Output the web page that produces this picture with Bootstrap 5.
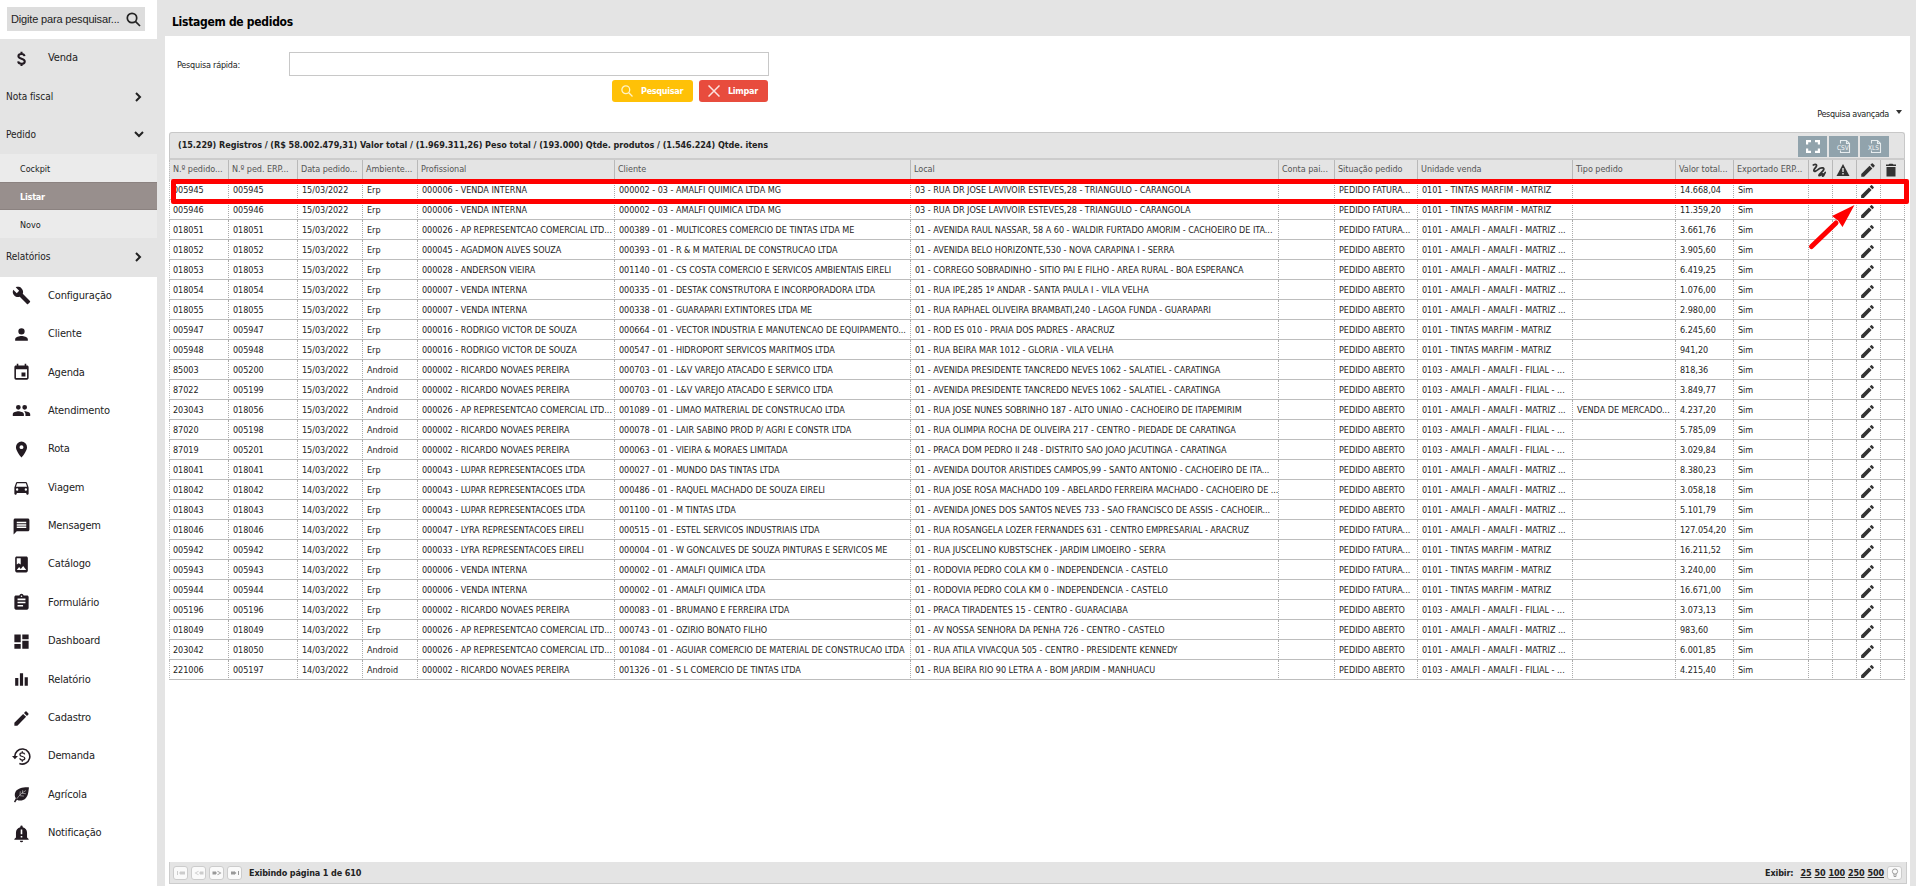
<!DOCTYPE html>
<html lang="pt-BR">
<head>
<meta charset="utf-8">
<title>Listagem de pedidos</title>
<meta name="viewport" content="width=device-width, initial-scale=1">
<link href="https://cdn.jsdelivr.net/npm/bootstrap@5.3.0/dist/css/bootstrap.min.css" rel="stylesheet">
<style>
  body { height: 886px; overflow: hidden; background: #fff; color: #222; font-family: "DejaVu Sans Condensed", "DejaVu Sans", sans-serif; font-size: 9px; line-height: 12px; letter-spacing: -.03px; }
  svg { display: block; flex-shrink: 0; }
  .side { width: 157px; }
  .side-search { height: 24px; margin: 7px 12px 8px 7px; padding: 0 4px 0 4px; background: #ddd; font-family: "Liberation Sans", sans-serif; font-size: 11px; letter-spacing: -.17px; white-space: nowrap; }
  .side-item { height: 38.4px; padding: 0 15px 0 6px; font-size: 10px; }
  .side-item.main-item { padding-left: 12px; font-size: 11px; letter-spacing: -.17px; gap: 17px; }
  .side-item svg { fill: #231b22; }
  .side-group { background: #e4e4e4; }
  .side-sub { height: 28px; padding: 1px 0 0 20px; background: #ebebeb; }
  .side-sub.current { background: #988f8d; color: #fff; font-weight: 700; border-top: 1px solid #8b8280; border-bottom: 1px solid #8b8280; letter-spacing: -.2px; }
  .main-area { background: #e4e4e4; padding: 0 7px 0 8px; }
  .page-title { height: 36px; padding: 7px 0 0 7px; font-size: 12px; line-height: 30px; font-weight: 700; color: #000; letter-spacing: -.29px; }
  .sheet { background: #fff; padding: 16px 3px 2px 4px; }
  .quick { height: 24px; padding-left: 8px; letter-spacing: -.22px; }
  .quick label { width: 112px; padding-top: 1px; }
  .quick input { width: 480px; height: 24px; border: 1px solid #c8c8c8; border-radius: 0; padding: 0 4px; }
  .actions { padding: 4px 0 0 443px; gap: 6px; }
  .act { height: 22px; border: 0; border-radius: 3px; color: #fff; font-size: 9px; font-weight: 700; padding: 0 0 0 9px; gap: 8px; line-height: 1; letter-spacing: -.3px; }
  .act-search { width: 81px; background: #ffc107; }
  .act-clear { width: 69px; background: #e84c3d; }
  .adv { height: 30px; padding: 0 5px 7px 0; gap: 7px; letter-spacing: -.33px; }
  .caret-mark { border: 3px solid transparent; border-top: 4px solid #333; border-bottom: 0; margin-top: -4px; }
  .gridbar { height: 28px; width: 1736px; background: #e4e4e4; border: 1px solid #c8c8c8; border-bottom: 2px solid #ccc; border-radius: 3px 3px 0 0; padding: 0 15px 0 8px; font-weight: 700; letter-spacing: -.05px; }
  .gridbar > span { margin-top: -2px; }
  .exports { gap: 2px; margin-top: 1px; }
  .exp { background: #91a3ac; height: 21px; width: 29px; display: flex; align-items: center; justify-content: center; }
  .orders { table-layout: fixed; width: 1736px; margin: 0; border-collapse: separate; border-spacing: 0; }
  .orders th { height: 20px; background: #e4e4e4; color: #555; font-weight: 400; padding: 0 0 2px 3px; border-right: 1px solid #b9b9b9; white-space: nowrap; overflow: hidden; line-height: 12px; letter-spacing: -.05px; }
  .orders td { height: 20px; padding: 0 0 0 4px; border-right: 1px dotted #aaa; border-bottom: 1px solid #bdbdbd; white-space: nowrap; overflow: hidden; line-height: 12px; }
  .orders th:first-child, .orders td:first-child { border-left: 1px dotted #bbb; padding-left: 3px; }
  .orders svg { fill: #333; }
  .orders td svg { margin: 3px 0 -1px -2px; }
  .orders th svg { margin: 1px 0 0 0; }
  .orders th svg.pen-head { margin: 0 0 -1px -1px; }
  .foot { height: 22px; width: 1738px; background: #e4e4e4; border: 1px solid #ccc; border-top: 0; font-weight: 700; padding: 0 4px 0 3px; letter-spacing: -.13px; }
  .foot a { color: #222; }
  .foot-sizes { gap: 3px; }
  .pg { width: 15px; height: 14px; background: #fafafa; border: 1px solid #ccc; border-radius: 3px; display: flex; align-items: center; justify-content: center; margin-right: 3px; }
  .mark-row { position: absolute; left: 171px; top: 179px; width: 1738px; height: 25px; border: 5px solid #f00; border-radius: 2px; }
  .mark-arrow { position: absolute; left: 1800px; top: 200px; }
</style>
</head>
<body class="d-flex position-relative">
<svg width="0" height="0" class="position-absolute">
  <symbol id="pen" viewBox="0 0 24 24"><path d="M3 17.250V21h3.750L17.810 9.940l-3.750-3.750L3 17.250zM20.710 7.040a1 1 0 0 0 0-1.410l-2.340-2.340a1 1 0 0 0-1.410 0l-1.830 1.830 3.750 3.750 1.830-1.830z"/></symbol>
</svg>
<aside class="side flex-shrink-0">
  <div class="side-search d-flex align-items-center justify-content-between"><span>Digite para pesquisar...</span>
    <svg width="15" height="15" viewBox="0 0 15 15" fill="none" stroke="#222" stroke-width="1.7"><circle cx="6" cy="6" r="4.700"/><path d="M9.400 9.400l4.600 4.600"/></svg></div>
  <nav id="side"></nav>
</aside>
<main class="main-area flex-grow-1 d-flex flex-column">
  <div class="page-title">Listagem de pedidos</div>
  <section class="sheet flex-grow-1 d-flex flex-column">
    <div class="quick d-flex align-items-center"><label for="q">Pesquisa rápida:</label><input id="q" type="text"></div>
    <div class="actions d-flex">
      <button class="act act-search d-flex align-items-center"><svg width="12" height="12" viewBox="0 0 12 12" fill="none" stroke="#fff3c8" stroke-width="1.3"><circle cx="4.800" cy="4.800" r="3.900"/><path d="M7.800 7.800l3.700 3.700"/></svg>Pesquisar</button>
      <button class="act act-clear d-flex align-items-center"><svg width="12" height="12" viewBox="0 0 12 12" fill="none" stroke="#fbe3e0" stroke-width="1.500"><path d="M.5 .5l11 11M11.500 .5l-11 11"/></svg>Limpar</button>
    </div>
    <div class="adv d-flex align-items-center justify-content-end"><span>Pesquisa avançada</span><i class="caret-mark"></i></div>
    <div class="gridbar d-flex align-items-center justify-content-between"><span>(15.229) Registros / (R$ 58.002.479,31) Valor total / (1.969.311,26) Peso total / (193.000) Qtde. produtos / (1.546.224) Qtde. itens</span>
      <div class="exports d-flex">
        <span class="exp"><svg width="14" height="13" viewBox="0 0 14 13" fill="none" stroke="#fff" stroke-width="2.200"><path d="M1.100 4.500V1.100H5M9 1.100h3.900v3.400M12.900 8.500v3.400H9M5 11.900H1.100V8.500"/></svg></span>
        <span class="exp"><svg width="16" height="15" viewBox="0 0 16 15" fill="none" stroke="#e6ecee" stroke-width="1.100"><path d="M4.500 4.500v-3h6l3 3v9h-9v-2M10.500 1.500v3h3"/><text x="1" y="11" font-size="6.500" font-weight="400" fill="#f2f5f6" stroke="none">CSV</text></svg></span>
        <span class="exp"><svg width="16" height="15" viewBox="0 0 16 15" fill="none" stroke="#e6ecee" stroke-width="1.100"><path d="M4.500 4.500v-3h6l3 3v9h-9v-2M10.500 1.500v3h3"/><text x="1" y="11" font-size="6.500" font-weight="400" fill="#f2f5f6" stroke="none">XLS</text></svg></span>
      </div></div>
    <table class="orders"><colgroup id="cols"></colgroup><thead><tr id="head"></tr></thead><tbody id="rows"></tbody></table>
    <div class="foot d-flex align-items-center mt-auto">
      <span class="pg"><svg width="10" height="6" viewBox="0 0 10 6" fill="#ccc"><path d="M1 1h1v4H1zM5 1v4L3 3zM5 1.500h4v3H5z"/></svg></span>
      <span class="pg"><svg width="10" height="6" viewBox="0 0 10 6" fill="#ccc"><path d="M4.500 .8v1L2 3l2.500 1.200v1L.5 3zM7 1v4L5 3zM7 1.500h2.500v3H7z"/></svg></span>
      <span class="pg"><svg width="10" height="6" viewBox="0 0 10 6" fill="#999"><path d="M.5 1.500H3V1l2 2-2 2v-.5H.5zM5.500 .8v1L8 3 5.500 4.200v1L9.500 3z"/></svg></span>
      <span class="pg"><svg width="10" height="6" viewBox="0 0 10 6" fill="#999"><path d="M1 1.500h3V1l2.500 2L4 5v-.5H1zM8 1h1v4H8z"/></svg></span>
      <span class="ms-1">Exibindo página 1 de 610</span>
      <span class="foot-sizes ms-auto d-flex align-items-center"><span class="me-1">Exibir:</span><a href="#">25</a><a href="#">50</a><a href="#">100</a><a href="#">250</a><a href="#">500</a>
      <span class="pg m-0"><svg width="8" height="10" viewBox="0 0 8 10" fill="none" stroke="#888" stroke-width=".8"><circle cx="4" cy="3.500" r="2.600"/><path d="M3 6v2.500h2V6"/></svg></span></span>
    </div>
  </section>
</main>
<div class="mark-row"></div>
<svg class="mark-arrow" width="60" height="52"><path d="M11.500 46.500L36 23" stroke="#f00" stroke-width="5" stroke-linecap="round"/><path d="M54.500 5L32 16l6 4.500 4.500 6.500z" fill="#f00"/></svg>
<script>
const chevR='<svg width="7" height="10" viewBox="0 0 7 10" style="fill:none" stroke="#222" stroke-width="2"><path d="M1 1l4 4-4 4"/></svg>';
const chevD='<svg width="10" height="7" viewBox="0 0 10 7" style="fill:none;margin-right:-2px" stroke="#222" stroke-width="2"><path d="M1 1l4 4 4-4"/></svg>';
const icon=d=>`<svg width="19" height="19" viewBox="0 0 24 24">${d[0]=="<"?d:`<path d="${d}"/>`}</svg>`;
const item=(t,d)=>`<div class="side-item main-item d-flex align-items-center">${icon(d)}<span>${t}</span></div>`;
const group=(t,c)=>`<div class="side-item d-flex align-items-center justify-content-between"><span>${t}</span>${c}</div>`;
const sub=(t,c="")=>`<div class="side-sub d-flex align-items-center ${c}">${t}</div>`;
const menu=[
["Configuração","M22.700 19l-9.100-9.100c.9-2.300.4-5-1.500-6.900-2-2-5-2.400-7.400-1.300L9 6 6 9 1.600 4.700C.4 7.100.9 10.100 2.900 12.100c1.900 1.900 4.600 2.400 6.900 1.500l9.100 9.100c.4.4 1 .4 1.400 0l2.300-2.300c.5-.4.5-1.100.1-1.400z"],
["Cliente","M12 12a4 4 0 1 0 0-8 4 4 0 0 0 0 8zm0 2c-2.700 0-8 1.300-8 4v2h16v-2c0-2.700-5.300-4-8-4z"],
["Agenda","M17 12h-5v5h5v-5zM16 1v2H8V1H6v2H5c-1.100 0-2 .9-2 2v14a2 2 0 0 0 2 2h14c1.100 0 2-.9 2-2V5c0-1.100-.9-2-2-2h-1V1h-2zm3 18H5V8h14v11z"],
["Atendimento","M16 11a3 3 0 1 0 0-6 3 3 0 0 0 0 6zm-8 0a3 3 0 1 0 0-6 3 3 0 0 0 0 6zm0 2c-2.300 0-7 1.200-7 3.500V19h14v-2.500C15 14.200 10.300 13 8 13zm8 0c-.3 0-.6 0-1 .1 1.200.8 2 2 2 3.400V19h6v-2.500c0-2.300-4.700-3.500-7-3.500z"],
["Rota","M12 2a7 7 0 0 0-7 7c0 5.250 7 13 7 13s7-7.750 7-13a7 7 0 0 0-7-7zm0 9.500a2.500 2.500 0 1 1 0-5 2.500 2.500 0 0 1 0 5z"],
["Viagem","M18.900 6c-.2-.6-.8-1-1.400-1h-11c-.7 0-1.200.4-1.400 1L3 12v8c0 .6.500 1 1 1h1c.6 0 1-.4 1-1v-1h12v1c0 .6.500 1 1 1h1c.6 0 1-.4 1-1v-8l-2.100-6zM6.500 16a1.500 1.500 0 1 1 0-3 1.500 1.500 0 0 1 0 3zm11 0a1.500 1.500 0 1 1 0-3 1.500 1.500 0 0 1 0 3zM5 11l1.500-4.500h11L19 11H5z"],
["Mensagem","M20 2H4c-1.100 0-2 .9-2 2v18l4-4h14c1.100 0 2-.9 2-2V4c0-1.100-.9-2-2-2zm-2 12H6v-2h12v2zm0-3H6V9h12v2zm0-3H6V6h12v2z"],
["Catálogo","M18 2H6c-1.100 0-2 .9-2 2v16c0 1.100.9 2 2 2h12c1.100 0 2-.9 2-2V4c0-1.100-.9-2-2-2zM6 4h5v8l-2.500-1.500L6 12V4zm0 15l3-3.900 2.100 2.600 3-3.900L18 19H6z"],
["Formulário","M19 3h-4.200a3 3 0 0 0-5.600 0H5c-1.100 0-2 .9-2 2v14c0 1.100.9 2 2 2h14c1.100 0 2-.9 2-2V5c0-1.100-.9-2-2-2zm-7 0a1 1 0 1 1 0 2 1 1 0 0 1 0-2zm2 14H7v-2h7v2zm3-4H7v-2h10v2zm0-4H7V7h10v2z"],
["Dashboard","M3 13h8V3H3v10zm0 8h8v-6H3v6zm10 0h8V11h-8v10zm0-18v6h8V3h-8z"],
["Relatório","M4 10h4v10H4zM10 4h4v16h-4zM16 9h4v11h-4z"],
["Cadastro",'<use href="#pen"/>'],
["Demanda",'<path d="M3.500 12.500a9.500 9.500 0 1 1 5.800 8.300" style="fill:none" stroke="#231b22" stroke-width="2"/><path d="M0 11.500h7.500L3.700 15.500z"/><path d="M16 9.300C15.800 8 14.500 7.500 13 7.500c-1.800 0-3 .8-3 2.200 0 3 6.200 1.600 6.200 4.600 0 1.400-1.300 2.200-3.100 2.200s-3.100-.8-3.200-2.200M13 5.500v2M13 16.500v2" style="fill:none" stroke="#231b22" stroke-width="1.600"/>'],
["Agrícola",'<path d="M21.500 3C15 2.500 7 4 4.500 8.500c-1.600 3-1.200 6 .3 8.200L2.500 21l1.500 1 2.300-3.500c3 1.800 7.600 1.500 10.700-1.500C21 13 20.500 8 21.500 3z"/><path d="M6 17.500C9 13 13 9.500 17.500 7M10 13l.5-5M13 10.500l.5-4M10 13.500l5 .5M13 10.500l4.500.5" style="fill:none" stroke="#fff" stroke-width=".6"/>'],
["Notificação","M12 23a2 2 0 0 0 2-2h-4a2 2 0 0 0 2 2zm7-6v-6c0-3.400-2-6.100-5.500-6.800V3.500a1.500 1.500 0 0 0-3 0v.7C7 4.900 5 7.600 5 11v6l-2 2v1h18v-1l-2-2zm-6 0h-2v-2h2v2zm0-4h-2V7h2v6z"]];
document.getElementById("side").innerHTML='<div class="side-group">'+
 item("Venda",'<path d="M15.800 9c-.3-1.800-1.800-2.600-3.800-2.600-2.300 0-3.900 1-3.900 2.800 0 4 8 2.300 8 6.500 0 1.900-1.700 3-4.100 3-2.400 0-4-1.100-4.200-3M12 3.500v3M12 18.500v3" style="fill:none" stroke="#231b22" stroke-width="2.600"/>')+
 group("Nota fiscal",chevR)+group("Pedido",chevD)+sub("Cockpit")+sub("Listar","current")+sub("Novo")+group("Relatórios",chevR)+'</div>'+menu.map(m=>item(...m)).join("");

const edges=[169,229,298,363,418,615,911,1279,1335,1418,1573,1676,1734,1809,1833,1857,1881,1905];
document.getElementById("cols").innerHTML=edges.slice(1).map((e,i)=>`<col style="width:${e-edges[i]}px">`).join("");
const pen=(s,c="")=>`<svg width="${s}" height="${s}" class="${c}"><use href="#pen"/></svg>`;
const heads=["N.º pedido...","N.º ped. ERP...","Data pedido...","Ambiente...","Profissional","Cliente","Local","Conta pai...","Situação pedido","Unidade venda","Tipo pedido","Valor total...","Exportado ERP...",
'<svg width="14" height="14" viewBox="0 0 14 14" style="fill:none" stroke="#333" stroke-width="1.800"><path d="M.8 2.500C2 1 4.800 .8 4.500 2.800S1.200 6 2 7.800s4-1.500 6-2.500 4.500-.5 3.600 1.600-5.400 4.500-4.600 5.600 4.300-3 4.300-1-1.300 1.500-.3 1.500 1-2.500 2.800-4"/></svg>',
'<svg width="14" height="14" viewBox="0 0 14 14"><path d="M7 1l6.500 12H.5z"/><path d="M6.300 5h1.400v4H6.300zM6.300 10h1.400v1.400H6.300z" style="fill:#e4e4e4"/></svg>',
pen(18,"pen-head"),'<svg width="14" height="14" viewBox="0 0 14 14"><path d="M2.500 4h9v9.500h-9zM2 1.500h2.500L5.500.7h3l1 .8H12V3H2z"/></svg>'];
document.getElementById("head").innerHTML=heads.map(h=>`<th>${h}</th>`).join("");

const T="0101 - TINTAS MARFIM - MATRIZ", A="0101 - AMALFI - AMALFI - MATRIZ ...", F="0103 - AMALFI - AMALFI - FILIAL - ...";
const data=`005945|005945|15|E|000006 - VENDA INTERNA|000002 - 03 - AMALFI QUIMICA LTDA MG|03 - RUA DR JOSE LAVIVOIR ESTEVES,28 - TRIANGULO - CARANGOLA|F|T|14.668,04
005946|005946|15|E|000006 - VENDA INTERNA|000002 - 03 - AMALFI QUIMICA LTDA MG|03 - RUA DR JOSE LAVIVOIR ESTEVES,28 - TRIANGULO - CARANGOLA|F|T|11.359,20
018051|018051|15|E|000026 - AP REPRESENTCAO COMERCIAL LTD...|000389 - 01 - MULTICORES COMERCIO DE TINTAS LTDA ME|01 - AVENIDA RAUL NASSAR, 58 A 60 - WALDIR FURTADO AMORIM - CACHOEIRO DE ITA...|F|A|3.661,76
018052|018052|15|E|000045 - AGADMON ALVES SOUZA|000393 - 01 - R &amp; M MATERIAL DE CONSTRUCAO LTDA|01 - AVENIDA BELO HORIZONTE,530 - NOVA CARAPINA I - SERRA|A|A|3.905,60
018053|018053|15|E|000028 - ANDERSON VIEIRA|001140 - 01 - CS COSTA COMERCIO E SERVICOS AMBIENTAIS EIRELI|01 - CORREGO SOBRADINHO - SITIO PAI E FILHO - AREA RURAL - BOA ESPERANCA|A|A|6.419,25
018054|018054|15|E|000007 - VENDA INTERNA|000335 - 01 - DESTAK CONSTRUTORA E INCORPORADORA LTDA|01 - RUA IPE,285 1º ANDAR - SANTA PAULA I - VILA VELHA|A|A|1.076,00
018055|018055|15|E|000007 - VENDA INTERNA|000338 - 01 - GUARAPARI EXTINTORES LTDA ME|01 - RUA RAPHAEL OLIVEIRA BRAMBATI,240 - LAGOA FUNDA - GUARAPARI|A|A|2.980,00
005947|005947|15|E|000016 - RODRIGO VICTOR DE SOUZA|000664 - 01 - VECTOR INDUSTRIA E MANUTENCAO DE EQUIPAMENTO...|01 - ROD ES 010 - PRAIA DOS PADRES - ARACRUZ|A|T|6.245,60
005948|005948|15|E|000016 - RODRIGO VICTOR DE SOUZA|000547 - 01 - HIDROPORT SERVICOS MARITMOS LTDA|01 - RUA BEIRA MAR 1012 - GLORIA - VILA VELHA|A|T|941,20
85003|005200|15|A|000002 - RICARDO NOVAES PEREIRA|000703 - 01 - L&amp;V VAREJO ATACADO E SERVICO LTDA|01 - AVENIDA PRESIDENTE TANCREDO NEVES 1062 - SALATIEL - CARATINGA|A|F|818,36
87022|005199|15|A|000002 - RICARDO NOVAES PEREIRA|000703 - 01 - L&amp;V VAREJO ATACADO E SERVICO LTDA|01 - AVENIDA PRESIDENTE TANCREDO NEVES 1062 - SALATIEL - CARATINGA|A|F|3.849,77
203043|018056|15|A|000026 - AP REPRESENTCAO COMERCIAL LTD...|001089 - 01 - LIMAO MATRERIAL DE CONSTRUCAO LTDA|01 - RUA JOSE NUNES SOBRINHO 187 - ALTO UNIAO - CACHOEIRO DE ITAPEMIRIM|A|A|4.237,20|VENDA DE MERCADO...
87020|005198|15|A|000002 - RICARDO NOVAES PEREIRA|000078 - 01 - LAIR SABINO PROD P/ AGRI E CONSTR LTDA|01 - RUA OLIMPIA ROCHA DE OLIVEIRA 217 - CENTRO - PIEDADE DE CARATINGA|A|F|5.785,09
87019|005201|15|A|000002 - RICARDO NOVAES PEREIRA|000063 - 01 - VIEIRA &amp; MORAES LIMITADA|01 - PRACA DOM PEDRO II 248 - DISTRITO SAO JOAO JACUTINGA - CARATINGA|A|F|3.029,84
018041|018041|14|E|000043 - LUPAR REPRESENTACOES LTDA|000027 - 01 - MUNDO DAS TINTAS LTDA|01 - AVENIDA DOUTOR ARISTIDES CAMPOS,99 - SANTO ANTONIO - CACHOEIRO DE ITA...|A|A|8.380,23
018042|018042|14|E|000043 - LUPAR REPRESENTACOES LTDA|000486 - 01 - RAQUEL MACHADO DE SOUZA EIRELI|01 - RUA JOSE ROSA MACHADO 109 - ABELARDO FERREIRA MACHADO - CACHOEIRO DE ...|A|A|3.058,18
018043|018043|14|E|000043 - LUPAR REPRESENTACOES LTDA|001100 - 01 - M TINTAS LTDA|01 - AVENIDA JONES DOS SANTOS NEVES 733 - SAO FRANCISCO DE ASSIS - CACHOEIR...|A|A|5.101,79
018046|018046|14|E|000047 - LYRA REPRESENTACOES EIRELI|000515 - 01 - ESTEL SERVICOS INDUSTRIAIS LTDA|01 - RUA ROSANGELA LOZER FERNANDES 631 - CENTRO EMPRESARIAL - ARACRUZ|F|A|127.054,20
005942|005942|14|E|000033 - LYRA REPRESENTACOES EIRELI|000004 - 01 - W GONCALVES DE SOUZA PINTURAS E SERVICOS ME|01 - RUA JUSCELINO KUBSTSCHEK - JARDIM LIMOEIRO - SERRA|F|T|16.211,52
005943|005943|14|E|000006 - VENDA INTERNA|000002 - 01 - AMALFI QUIMICA LTDA|01 - RODOVIA PEDRO COLA KM 0 - INDEPENDENCIA - CASTELO|F|T|3.240,00
005944|005944|14|E|000006 - VENDA INTERNA|000002 - 01 - AMALFI QUIMICA LTDA|01 - RODOVIA PEDRO COLA KM 0 - INDEPENDENCIA - CASTELO|F|T|16.671,00
005196|005196|14|E|000002 - RICARDO NOVAES PEREIRA|000083 - 01 - BRUMANO E FERREIRA LTDA|01 - PRACA TIRADENTES 15 - CENTRO - GUARACIABA|A|F|3.073,13
018049|018049|14|E|000026 - AP REPRESENTCAO COMERCIAL LTD...|000743 - 01 - OZIRIO BONATO FILHO|01 - AV NOSSA SENHORA DA PENHA 726 - CENTRO - CASTELO|A|A|983,60
203042|018050|14|A|000026 - AP REPRESENTCAO COMERCIAL LTD...|001084 - 01 - AGUIAR COMERCIO DE MATERIAL DE CONSTRUCAO LTDA|01 - RUA ATILA VIVACQUA 505 - CENTRO - PRESIDENTE KENNEDY|A|A|6.001,85
221006|005197|14|A|000002 - RICARDO NOVAES PEREIRA|001326 - 01 - S L COMERCIO DE TINTAS LTDA|01 - RUA BEIRA RIO 90 LETRA A - BOM JARDIM - MANHUACU|A|F|4.215,40`;
document.getElementById("rows").innerHTML=data.split("\n").map(l=>{const r=l.split("|");
 const c=[r[0],r[1],r[2]+"/03/2022",r[3]=="E"?"Erp":"Android",r[4],r[5],r[6],"",r[7]=="F"?"PEDIDO FATURA...":"PEDIDO ABERTO",{T,A,F}[r[8]],r[10]||"",r[9],"Sim","","",pen(17),""];
 return "<tr>"+c.map(x=>`<td>${x}</td>`).join("")+"</tr>"}).join("");
</script>
<script src="https://cdn.jsdelivr.net/npm/bootstrap@5.3.0/dist/js/bootstrap.bundle.min.js"></script>
</body>
</html>
